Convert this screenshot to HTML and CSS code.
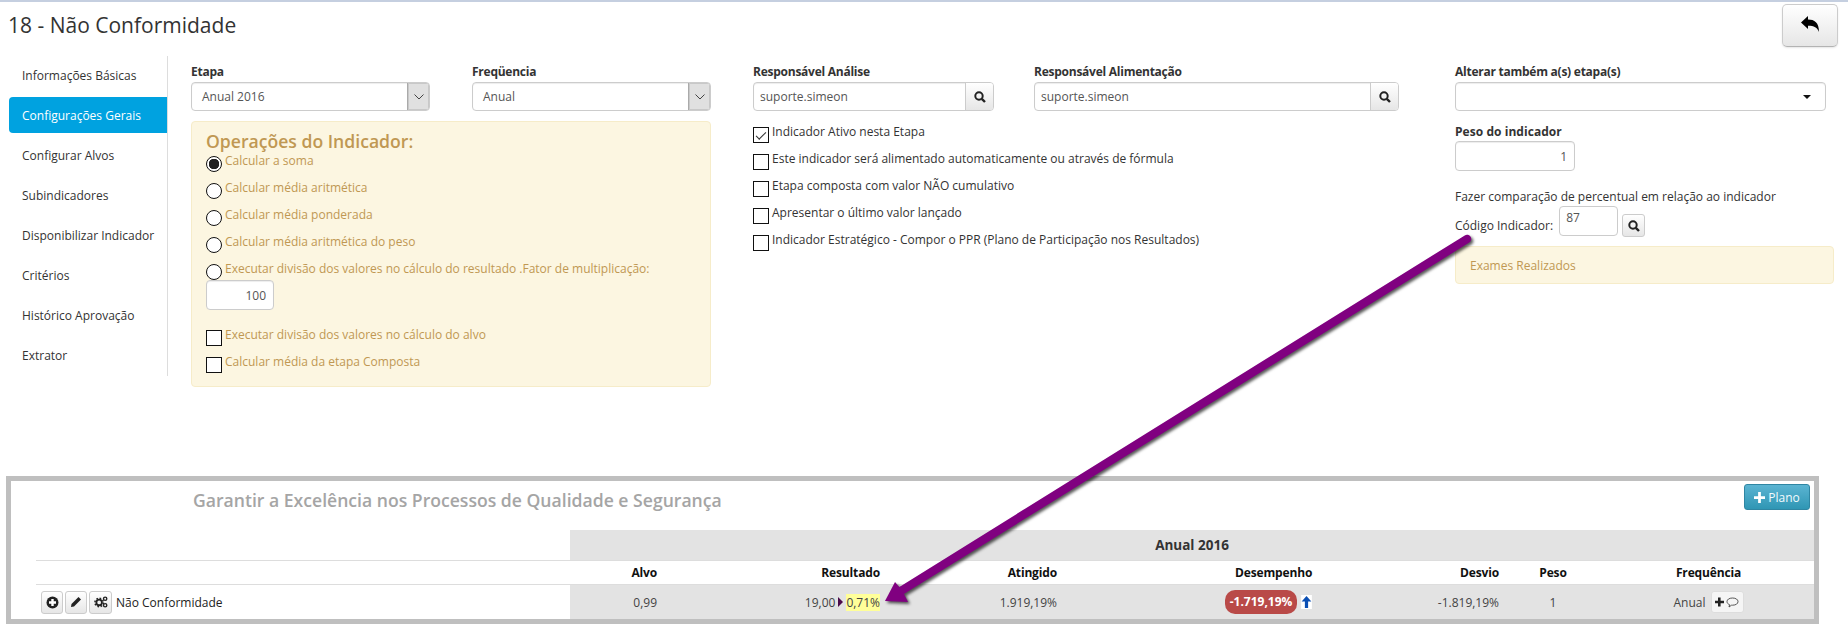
FILE: index.html
```html
<!DOCTYPE html>
<html lang="pt-BR">
<head>
  <meta charset="UTF-8">
  <title>18 - Não Conformidade</title>
  <link rel="stylesheet" href="styles.css">
</head>
<body>
  <header class="page-head">
    <h1 class="page-title">18 - Não Conformidade</h1>
    <button class="back-btn" type="button">
      <svg width="18" height="16" viewBox="0 0 18 16"><path d="M0 6.500 7 0v3.600c6.500 0 11 3 11 12.400-1.500-4.600-5-6.300-11-6.300V13z"/></svg>
    </button>
  </header>

  <main class="main">
    <nav class="side-nav">
      <a class="nav-item">Informações Básicas</a>
      <a class="nav-item active">Configurações Gerais</a>
      <a class="nav-item">Configurar Alvos</a>
      <a class="nav-item">Subindicadores</a>
      <a class="nav-item">Disponibilizar Indicador</a>
      <a class="nav-item">Critérios</a>
      <a class="nav-item">Histórico Aprovação</a>
      <a class="nav-item">Extrator</a>
    </nav>

    <section class="col col-ops">
      <div class="field-row">
        <div class="field field-etapa">
          <label class="field-label">Etapa</label>
          <div class="fake-select">
            <span class="fake-value">Anual 2016</span>
            <span class="select-btn"><svg width="10" height="6" viewBox="0 0 10 6"><path d="M.5.500 5 5 9.500.5" fill="none" stroke="#444"/></svg></span>
          </div>
        </div>
        <div class="field field-freq">
          <label class="field-label">Freqüencia</label>
          <div class="fake-select">
            <span class="fake-value">Anual</span>
            <span class="select-btn"><svg width="10" height="6" viewBox="0 0 10 6"><path d="M.5.500 5 5 9.500.5" fill="none" stroke="#444"/></svg></span>
          </div>
        </div>
      </div>

      <div class="ops-box">
        <h3 class="ops-title">Operações do Indicador:</h3>
        <label class="check-row"><input class="radio" type="radio" name="op" checked> Calcular a soma</label>
        <label class="check-row"><input class="radio" type="radio" name="op"> Calcular média aritmética</label>
        <label class="check-row"><input class="radio" type="radio" name="op"> Calcular média ponderada</label>
        <label class="check-row"><input class="radio" type="radio" name="op"> Calcular média aritmética do peso</label>
        <label class="check-row short"><input class="radio" type="radio" name="op"> Executar divisão dos valores no cálculo do resultado .Fator de multiplicação:</label>
        <input class="num-input fator" type="text" value="100">
        <label class="check-row first-check"><input class="check" type="checkbox"> Executar divisão dos valores no cálculo do alvo</label>
        <label class="check-row"><input class="check" type="checkbox"> Calcular média da etapa Composta</label>
      </div>
    </section>

    <section class="col col-resp">
      <div class="field-row">
        <div class="field field-analise">
          <label class="field-label">Responsável Análise</label>
          <div class="search-input">
            <span class="fake-value">suporte.simeon</span>
            <span class="search-btn"><svg class="icon-search" width="12" height="12" viewBox="0 0 12 12"><circle cx="5" cy="5" r="3.700" fill="none" stroke="#222" stroke-width="2"/><path d="M7.800 7.800 11 11" stroke="#222" stroke-width="2.400"/></svg></span>
          </div>
        </div>
        <div class="field field-alim">
          <label class="field-label">Responsável Alimentação</label>
          <div class="search-input">
            <span class="fake-value">suporte.simeon</span>
            <span class="search-btn"><svg class="icon-search" width="12" height="12" viewBox="0 0 12 12"><circle cx="5" cy="5" r="3.700" fill="none" stroke="#222" stroke-width="2"/><path d="M7.800 7.800 11 11" stroke="#222" stroke-width="2.400"/></svg></span>
          </div>
        </div>
      </div>
      <div class="resp-checks">
        <label class="check-row"><input class="check" type="checkbox" checked> Indicador Ativo nesta Etapa</label>
        <label class="check-row"><input class="check" type="checkbox"> Este indicador será alimentado automaticamente ou através de fórmula</label>
        <label class="check-row"><input class="check" type="checkbox"> Etapa composta com valor NÃO cumulativo</label>
        <label class="check-row"><input class="check" type="checkbox"> Apresentar o último valor lançado</label>
        <label class="check-row"><input class="check" type="checkbox"> Indicador Estratégico - Compor o PPR (Plano de Participação nos Resultados)</label>
      </div>
    </section>

    <section class="col col-extra">
      <label class="field-label">Alterar também a(s) etapa(s)</label>
      <div class="multi-select"><span class="caret"></span></div>

      <label class="field-label peso-label">Peso do indicador</label>
      <input class="num-input peso" type="text" value="1">

      <p class="compare-text">Fazer comparação de percentual em relação ao indicador</p>
      <div class="code-row">
        <span class="code-label">Código Indicador:</span>
        <input class="code-input" type="text" value="87">
        <span class="code-btn"><svg width="12" height="12" viewBox="0 0 12 12"><circle cx="5" cy="5" r="3.700" fill="none" stroke="#222" stroke-width="2"/><path d="M7.800 7.800 11 11" stroke="#222" stroke-width="2.400"/></svg></span>
      </div>
      <div class="code-alert">Exames Realizados</div>
    </section>
  </main>

  <section class="panel">
    <div class="panel-head">
      <h2 class="panel-title">Garantir a Excelência nos Processos de Qualidade e Segurança</h2>
      <button class="plan-btn" type="button">
        <svg width="11" height="11" viewBox="0 0 12 12"><path d="M4.500 0h3v4.500H12v3H7.500V12h-3V7.500H0v-3h4.500z" fill="#fff"/></svg>
        Plano
      </button>
    </div>

    <table class="ind-table">
      <colgroup>
        <col class="c-name"><col class="c-alvo"><col class="c-res"><col class="c-ating"><col class="c-desemp"><col class="c-desvio"><col class="c-peso"><col class="c-freq">
      </colgroup>
      <tr class="row-period">
        <td></td>
        <td class="period" colspan="7">Anual 2016</td>
      </tr>
      <tr class="row-head">
        <th></th>
        <th class="num">Alvo</th>
        <th class="num">Resultado</th>
        <th class="num">Atingido</th>
        <th class="desemp-head">Desempenho</th>
        <th class="num">Desvio</th>
        <th class="mid">Peso</th>
        <th class="mid">Frequência</th>
      </tr>
      <tr class="row-data">
        <td class="name-cell">
          <div class="name-wrap">
            <span class="tool-btn"><svg width="13" height="13" viewBox="0 0 13 13"><circle cx="6.500" cy="6.500" r="6" fill="#222"/><path d="M5.300 3h2.400v2.300H10v2.400H7.700V10H5.300V7.700H3V5.300h2.300z" fill="#fff"/></svg></span>
            <span class="tool-btn"><svg width="12" height="12" viewBox="0 0 12 12"><path d="M8.500 1 11 3.500 4 10.500 1 11l.5-3z" fill="#222"/></svg></span>
            <span class="tool-btn wide"><svg width="14" height="12" viewBox="0 0 15 13"><circle cx="5.500" cy="7" r="3" fill="none" stroke="#222" stroke-width="2"/><circle cx="5.500" cy="7" r="4.600" fill="none" stroke="#222" stroke-width="1.600" stroke-dasharray="1.800 1.800"/><circle cx="12" cy="3" r="1.800" fill="none" stroke="#222" stroke-width="1.500"/><circle cx="12" cy="10" r="1.800" fill="none" stroke="#222" stroke-width="1.500"/></svg></span>
            <span class="ind-name">Não Conformidade</span>
          </div>
        </td>
        <td class="num">0,99</td>
        <td class="num"><span class="res-wrap">19,00<span class="tri"></span><span class="hl">0,71%</span></span></td>
        <td class="num muted">1.919,19%</td>
        <td class="desemp-cell">
          <span class="pill">-1.719,19%</span>
          <svg class="up-arrow" width="11" height="14" viewBox="0 0 10 13"><rect width="10" height="13" fill="#fff"/><path d="M5 1 9.500 6H6.500v6h-3V6H.5z" fill="#0b4fb3"/></svg>
        </td>
        <td class="num muted">-1.819,19%</td>
        <td class="mid muted">1</td>
        <td class="mid muted">
          <span class="freq-wrap">Anual
            <span class="note-btn">
              <svg width="24" height="12" viewBox="0 0 24 12"><path d="M3 1.500h2.600v3.200H9v2.600H5.600v3.200H3V7.300H0V4.700h3z" fill="#222"/><path d="M17.500 2c3.300 0 5.500 1.500 5.500 3.600s-2.200 3.600-5.500 3.600h-1L14 11l.6-2.300c-1.600-.6-2.600-1.700-2.600-3.100C12 3.500 14.200 2 17.500 2z" fill="none" stroke="#444" stroke-width=".9"/></svg>
            </span>
          </span>
        </td>
      </tr>
    </table>
  </section>

  <svg class="callout" width="1848" height="632" viewBox="0 0 1848 632">
    <path d="M1467 239 896 594" stroke="#800080" stroke-width="8.500" stroke-linecap="round" fill="none"/>
    <path d="M885 601 895 582 902 590 908 602z" fill="#800080"/>
  </svg>
</body>
</html>
```

FILE: styles.css
```css
html, body {
  margin: 0;
  padding: 0;
  height: 632px;
  overflow: hidden;
}

body {
  position: relative;
  background: #fff;
  border-top: 2px solid #c5cfe0;
  box-sizing: border-box;
  color: #333;
  font-family: "Open Sans", sans-serif;
  font-size: 12px;
}

/* Page header */
.page-head {
  display: flex;
  justify-content: space-between;
  height: 54px;
  padding: 2px 10px 0 8px;
  box-sizing: border-box;
}

.page-title {
  margin: 7px 0 0;
  font-size: 21px;
  line-height: 28px;
  font-weight: 400;
  color: #333;
}

.back-btn {
  width: 56px;
  height: 43px;
  border: 1px solid #ccc;
  border-bottom-color: #b3b3b3;
  border-radius: 5px;
  background: linear-gradient(to bottom, #fff, #e6e6e6);
  box-shadow: 0 1px 2px rgba(0, 0, 0, 0.1);
  padding: 0;
}

/* Main columns */
.main {
  display: flex;
  align-items: flex-start;
}

.side-nav {
  display: flex;
  flex-direction: column;
  gap: 4px;
  width: 159px;
  height: 320px;
  margin-left: 9px;
  padding-top: 1px;
  border-right: 1px solid #ddd;
  box-sizing: border-box;
}

.nav-item {
  display: block;
  height: 36px;
  line-height: 38px;
  padding-left: 13px;
  color: #333;
}

.nav-item.active {
  background: #00a2e0;
  color: #fff;
  border-radius: 4px 0 0 4px;
}

.col {
  padding-top: 9px;
}

.col-ops {
  width: 520px;
  margin-left: 23px;
}

.col-resp {
  width: 646px;
  margin-left: 42px;
}

.col-extra {
  width: 379px;
  margin-left: 56px;
}

.field-row {
  display: flex;
  justify-content: space-between;
}

.field-etapa { width: 239px; }
.field-freq { width: 239px; }
.field-analise { width: 241px; }
.field-alim { width: 365px; }

.field-label {
  display: block;
  height: 14px;
  line-height: 14px;
  margin-bottom: 3px;
  font-weight: 700;
  letter-spacing: -0.25px;
  color: #333;
}

.fake-select, .search-input, .multi-select {
  display: flex;
  justify-content: space-between;
  height: 29px;
  border: 1px solid #ccc;
  border-radius: 4px;
  box-sizing: border-box;
  box-shadow: inset 0 1px 1px rgba(0, 0, 0, 0.075);
  background: #fff;
  overflow: hidden;
}

.fake-value {
  padding-left: 10px;
  line-height: 27px;
  color: #555;
}

.search-input .fake-value {
  padding-left: 6px;
}

.select-btn {
  display: flex;
  align-items: center;
  justify-content: center;
  width: 21px;
  background: #e0e0e0;
  border-left: 1px solid #aaa;
  box-shadow: inset 0 0 0 1px #c8c8c8;
}

.search-btn {
  display: flex;
  align-items: center;
  justify-content: center;
  width: 27px;
  background: linear-gradient(to bottom, #fff, #e6e6e6);
  border-left: 1px solid #ccc;
}

/* Operations box */
.ops-box {
  margin-top: 10px;
  height: 266px;
  padding: 7px 14px 0;
  background: #fcf6e1;
  border: 1px solid #f6ecc9;
  border-radius: 4px;
  box-sizing: border-box;
  color: #c09853;
}

.ops-title {
  margin: 0;
  font-size: 17.600px;
  line-height: 24px;
  font-weight: 600;
  color: #c09853;
}

.check-row {
  display: flex;
  align-items: flex-start;
  height: 27px;
  line-height: 16px;
}

.check-row.short {
  height: 19px;
}

.check-row.first-check {
  margin-top: 17px;
}

.radio, .check {
  appearance: none;
  flex: none;
  width: 16px;
  height: 16px;
  margin: 3px 3px 0 0;
  border: 1px solid #111;
  background: #fff;
  box-sizing: border-box;
}

.radio {
  border-radius: 50%;
}

.radio:checked {
  background: radial-gradient(circle, #222 0, #222 5px, #fff 5.500px);
}

.check:checked::after {
  content: "";
  display: block;
  width: 9px;
  height: 4px;
  margin: 4px 0 0 2px;
  border-left: 1px solid #333;
  border-bottom: 1px solid #333;
  transform: rotate(-45deg);
}

.num-input {
  display: block;
  height: 30px;
  padding: 0 7px;
  border: 1px solid #ccc;
  border-radius: 4px;
  box-sizing: border-box;
  box-shadow: inset 0 1px 1px rgba(0, 0, 0, 0.075);
  font: 12px "Open Sans", sans-serif;
  color: #555;
  text-align: right;
}

.fator { width: 68px; }
.peso { width: 120px; }

.resp-checks {
  margin-top: 13px;
}

/* Right column */
.multi-select {
  align-items: center;
  width: 371px;
}

.caret {
  margin-right: 14px;
  margin-left: auto;
  border-left: 4px solid transparent;
  border-right: 4px solid transparent;
  border-top: 4px solid #111;
}

.peso-label {
  margin-top: 14px;
  margin-bottom: 2px;
  letter-spacing: 0.05px;
}

.compare-text {
  margin: 18px 0 0;
  line-height: 16px;
}

.code-row {
  display: flex;
  align-items: flex-start;
  height: 31px;
  margin-top: 1px;
}

.code-label {
  margin-top: 12px;
  line-height: 16px;
}

.code-input {
  width: 59px;
  height: 30px;
  margin-left: 6px;
  padding: 0 6px 8px;
  border: 1px solid #ccc;
  border-radius: 4px;
  box-sizing: border-box;
  font: 12px "Open Sans", sans-serif;
  color: #555;
}

.code-btn {
  display: flex;
  align-items: center;
  justify-content: center;
  width: 23px;
  height: 23px;
  margin: 8px 0 0 4px;
  border: 1px solid #ccc;
  border-radius: 3px;
  box-sizing: border-box;
  background: linear-gradient(to bottom, #fff, #e6e6e6);
}

.code-alert {
  height: 38px;
  margin-top: 9px;
  padding-left: 14px;
  line-height: 38px;
  background: #fcf6e1;
  border: 1px solid #f6ecc9;
  border-radius: 4px;
  box-sizing: border-box;
  color: #c09853;
}

/* Bottom panel */
.panel {
  width: 1813px;
  height: 148px;
  margin: 89px 0 0 6px;
  border: 5px solid #bfbfbf;
  box-sizing: border-box;
}

.panel-head {
  display: flex;
  justify-content: space-between;
  height: 49px;
  padding: 3px 4px 0 182px;
  box-sizing: border-box;
}

.panel-title {
  margin: 4px 0 0;
  font-size: 17.600px;
  line-height: 24px;
  font-weight: 600;
  color: #a5a5a5;
}

.plan-btn {
  width: 66px;
  height: 26px;
  padding: 0;
  border: 1px solid #2f86a3;
  border-radius: 3px;
  background: linear-gradient(to bottom, #5bb4d2, #2f96b4);
  color: #f2fafd;
  font: 12px "Open Sans", sans-serif;
}

.plan-btn svg {
  vertical-align: -1px;
}

.ind-table {
  width: 1778px;
  margin-left: 25px;
  table-layout: fixed;
  border-collapse: collapse;
}

.c-name { width: 534px; }
.c-alvo { width: 91px; }
.c-res { width: 223px; }
.c-ating { width: 177px; }
.c-desemp { width: 339px; }
.c-desvio { width: 103px; }
.c-peso { width: 100px; }
.c-freq { width: 211px; }

.ind-table td, .ind-table th {
  padding: 0;
}

.row-period td {
  height: 30px;
  border-bottom: 1px solid #ddd;
}

.period {
  background: #e3e3e3;
  text-align: center;
  font-size: 13.500px;
  font-weight: 700;
  color: #333;
}

.row-head th {
  height: 23px;
  border-bottom: 1px solid #ddd;
  font-weight: 700;
  letter-spacing: -0.15px;
  color: #111;
}

.row-data td {
  height: 34px;
  background: #e3e3e3;
  color: #444;
}

.row-data .name-cell {
  background: #fff;
}

.ind-table .num {
  padding-right: 4px;
  text-align: right;
}

.ind-table .mid {
  text-align: center;
}

.ind-table .desemp-head {
  padding-left: 174px;
  text-align: left;
}

.ind-table .desemp-cell {
  padding-left: 164px;
}

.muted {
  color: #555;
}

.name-wrap {
  display: flex;
  align-items: center;
  gap: 2px;
  padding-left: 5px;
}

.tool-btn {
  display: flex;
  align-items: center;
  justify-content: center;
  width: 22px;
  height: 23px;
  border: 1px solid #ccc;
  border-radius: 3px;
  box-sizing: border-box;
  background: linear-gradient(to bottom, #fff, #e6e6e6);
}

.tool-btn.wide {
  width: 23px;
}

.ind-name {
  margin-left: 2px;
  color: #222;
}

.res-wrap {
  display: inline-flex;
  align-items: center;
}

.tri {
  width: 0;
  height: 0;
  margin: 0 3px;
  border-top: 5px solid transparent;
  border-bottom: 5px solid transparent;
  border-left: 5px solid #4b0b4b;
}

.hl {
  background: #ffff99;
  line-height: 17px;
}

.pill {
  display: inline-block;
  width: 72px;
  height: 24px;
  line-height: 24px;
  border-radius: 10px;
  background: #b94a48;
  color: #fff;
  font-weight: 700;
  text-align: center;
}

.up-arrow {
  margin-left: 1px;
  vertical-align: -3px;
}

.freq-wrap {
  display: inline-flex;
  align-items: center;
  gap: 5px;
}

.note-btn {
  display: flex;
  align-items: center;
  justify-content: center;
  width: 33px;
  height: 22px;
  border: 1px solid #ddd;
  border-radius: 3px;
  box-sizing: border-box;
  background: #f5f5f5;
}

/* Callout arrow drawn over the page */
.callout {
  position: absolute;
  top: -2px;
  left: 0;
  pointer-events: none;
  filter: drop-shadow(2px 2px 1.500px rgba(0, 0, 0, 0.65));
}
```
